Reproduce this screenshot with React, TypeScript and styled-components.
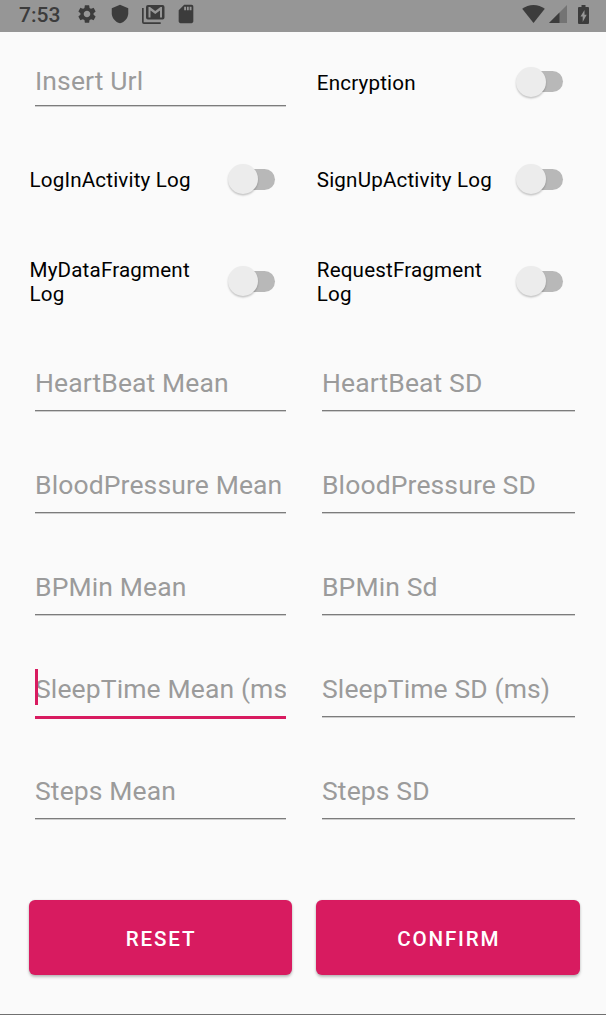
import React from 'react';
import styled, { createGlobalStyle } from 'styled-components';

const GlobalStyle = createGlobalStyle`
  * { box-sizing: border-box; }
  body { margin: 0; background: #fafafa; font-family: Roboto, "Liberation Sans", sans-serif; }
`;

const Screen = styled.div`
  display: flex;
  flex-direction: column;
  width: 606px;
  height: 1015px;
  overflow: hidden;
  background: #fafafa;
  border-bottom: 1px solid #707070;
`;

const StatusBar = styled.header`
  display: flex;
  align-items: center;
  justify-content: space-between;
  height: 32px;
  flex: none;
  padding: 0 17px 4px 19px;
  background: #969696;
  color: #3c3c3c;
`;

const StatusGroup = styled.div`
  display: flex;
  align-items: center;
`;

const Clock = styled.span`
  width: 57px;
  font-size: 21px;
  line-height: 26px;
  font-weight: 500;
  letter-spacing: 0;
  padding-top: 2px;
`;

const Icon = styled.svg<{ $gap?: number }>`
  display: block;
  flex: none;
  margin-right: ${(p) => p.$gap ?? 0}px;
  fill: currentColor;
`;

const Form = styled.main`
  display: grid;
  grid-template-columns: 263px 264px;
  grid-template-rows: 97px repeat(7, 102px) 1fr;
  column-gap: 24.3px;
  padding-left: 29px;
`;

const FieldCell = styled.div<{ $first?: boolean; $end?: boolean }>`
  padding: ${(p) => (p.$first ? 30 : 31)}px ${(p) => (p.$end ? 5.3 : 6)}px 0 ${(p) => (p.$end ? 5.7 : 6)}px;
`;

const FieldBox = styled.label<{ $focused?: boolean; $short?: boolean }>`
  display: flex;
  align-items: flex-start;
  position: relative;
  height: ${(p) => (p.$short ? 44 : p.$focused ? 49 : 47)}px;
  border-bottom: ${(p) => (p.$focused ? '3px solid #d81b60' : '1px solid #7c7c7c')};
  box-shadow: ${(p) => (p.$focused ? 'none' : '0 1px 0 rgba(0, 0, 0, 0.18)')};
`;

const Hint = styled.span`
  display: block;
  width: 100%;
  overflow: hidden;
  white-space: nowrap;
  color: #9b9b9b;
  font-size: 26.5px;
  line-height: 38px;
  letter-spacing: 0.12px;
`;

const Caret = styled.i`
  position: absolute;
  left: 0;
  top: -1px;
  width: 3px;
  height: 36px;
  background: #d81b60;
`;

const SwitchRow = styled.label<{ $first?: boolean }>`
  display: flex;
  align-items: center;
  justify-content: space-between;
  padding: ${(p) => (p.$first ? 4 : 0)}px 17px 0 0.5px;
`;

const SwitchText = styled.span<{ $first?: boolean }>`
  width: 185px;
  color: #000;
  font-size: 20.6px;
  line-height: 24.5px;
  letter-spacing: 0.17px;
  padding-top: ${(p) => (p.$first ? 2 : 0)}px;
`;

const Track = styled.span`
  display: flex;
  align-items: center;
  width: 40px;
  height: 21px;
  margin-bottom: 2px;
  border-radius: 11px;
  background: #b8b8b8;
`;

const Thumb = styled.span`
  flex: none;
  width: 30px;
  height: 30px;
  margin-left: -7px;
  border-radius: 50%;
  background: #ececec;
  box-shadow: 0 1.5px 2px rgba(0, 0, 0, 0.22);
`;

const ButtonCell = styled.div`
  padding-top: 57px;
`;

const ActionButton = styled.button`
  display: block;
  width: 100%;
  height: 75px;
  padding: 2px 0 0 1px;
  border: 0;
  border-radius: 6px;
  background: #d81b60;
  color: #fff;
  font: 500 20.6px/24px Roboto, "Liberation Sans", sans-serif;
  letter-spacing: 1.84px;
  box-shadow: 0 2px 3px rgba(0, 0, 0, 0.25), 0 0 2px rgba(0, 0, 0, 0.1);
`;

function Switch({ text, first }: { text: string; first?: boolean }) {
  return (
    <SwitchRow $first={first}>
      <SwitchText $first={first}>{text}</SwitchText>
      <Track>
        <Thumb />
      </Track>
    </SwitchRow>
  );
}

interface FieldProps {
  hint: string;
  first?: boolean;
  focused?: boolean;
  end?: boolean;
}

function Field({ hint, first, focused, end }: FieldProps) {
  return (
    <FieldCell $first={first} $end={end}>
      <FieldBox $short={first} $focused={focused}>
        {focused && <Caret />}
        <Hint>{hint}</Hint>
      </FieldBox>
    </FieldCell>
  );
}

const rows: [string, string][] = [
  ['HeartBeat Mean', 'HeartBeat SD'],
  ['BloodPressure Mean', 'BloodPressure SD'],
  ['BPMin Mean', 'BPMin Sd'],
  ['SleepTime Mean (ms', 'SleepTime SD (ms)'],
  ['Steps Mean', 'Steps SD'],
];

export default function App() {
  return (
    <Screen>
      <GlobalStyle />
      <StatusBar>
        <StatusGroup>
          <Clock>7:53</Clock>
          <Icon width="22" height="22" viewBox="0 0 24 24" $gap={11}>
            <path d="M19.14 12.94c.04-.3.06-.61.06-.94 0-.32-.02-.64-.07-.94l2.03-1.58a.49.49 0 0 0 .12-.61l-1.92-3.32a.488.488 0 0 0-.59-.22l-2.39.96c-.5-.38-1.03-.7-1.62-.94l-.36-2.54a.484.484 0 0 0-.48-.41h-3.84c-.24 0-.43.17-.47.41l-.36 2.54c-.59.24-1.13.57-1.62.94l-2.39-.96c-.22-.08-.47 0-.59.22L2.74 8.87c-.12.21-.08.47.12.61l2.03 1.58c-.05.3-.09.63-.09.94s.02.64.07.94l-2.03 1.58a.49.49 0 0 0-.12.61l1.92 3.32c.12.22.37.29.59.22l2.39-.96c.5.38 1.03.7 1.62.94l.36 2.54c.05.24.24.41.48.41h3.84c.24 0 .44-.17.47-.41l.36-2.54c.59-.24 1.13-.56 1.62-.94l2.39.96c.22.08.47 0 .59-.22l1.92-3.32c.12-.22.07-.47-.12-.61l-2.01-1.58zM12 15.6c-1.98 0-3.6-1.62-3.6-3.6s1.62-3.6 3.6-3.6 3.6 1.62 3.6 3.6-1.62 3.6-3.6 3.6z" />
          </Icon>
          <Icon width="22" height="20" viewBox="0 0 24 24" preserveAspectRatio="none" $gap={11}>
            <path d="M12 1 3 5v6c0 5.55 3.84 10.74 9 12 5.16-1.26 9-6.45 9-12V5l-9-4z" />
          </Icon>
          <Icon width="23" height="20" viewBox="0 0 23 20" $gap={10}>
            <path d="M0 4h1.700v14.300h17V20H2a2 2 0 0 1-2-2z" />
            <path
              fillRule="evenodd"
              d="M6 1h14.500a2 2 0 0 1 2 2v10.500a2 2 0 0 1-2 2H6a2 2 0 0 1-2-2V3a2 2 0 0 1 2-2zm.5 2v10.500h2V6.500l4.750 3.500L18 6.500v7h2V3h-1.500l-5.250 4L8 3z"
            />
          </Icon>
          <Icon width="22" height="22" viewBox="0 0 24 24">
            <path d="M18 2h-8L4.020 8 4 20c0 1.100.9 2 2 2h12c1.100 0 2-.9 2-2V4c0-1.100-.9-2-2-2zm-6 6h-2V4h2v4zm3 0h-2V4h2v4zm3 0h-2V4h2v4z" />
          </Icon>
        </StatusGroup>
        <StatusGroup>
          <Icon width="23" height="18" viewBox="0 0 23 18" $gap={4}>
            <path d="M11.500 18 .2 3.800C3.500 1.300 7.300 0 11.500 0s8 1.300 11.300 3.800z" />
          </Icon>
          <Icon width="18" height="18" viewBox="0 0 18 18" $gap={11}>
            <path d="M0 18 18 0v18z" opacity="0.38" />
            <path d="M0 18 10.500 7.500V18z" />
          </Icon>
          <Icon width="11" height="19" viewBox="0 0 11 19">
            <path
              fillRule="evenodd"
              d="M3.500 0h4v2H10a1 1 0 0 1 1 1v15a1 1 0 0 1-1 1H1a1 1 0 0 1-1-1V3a1 1 0 0 1 1-1h2.500zM6.500 5 2.500 11.500h2.200V17l4-7.200H6.500z"
            />
          </Icon>
        </StatusGroup>
      </StatusBar>
      <Form>
        <Field hint="Insert Url" first />
        <Switch text="Encryption" first />
        <Switch text="LogInActivity Log" />
        <Switch text="SignUpActivity Log" />
        <Switch text="MyDataFragment Log" />
        <Switch text="RequestFragment Log" />
        {rows.map(([mean, sd]) => (
          <React.Fragment key={mean}>
            <Field hint={mean} focused={mean.startsWith('SleepTime')} />
            <Field hint={sd} end />
          </React.Fragment>
        ))}
        <ButtonCell>
          <ActionButton>RESET</ActionButton>
        </ButtonCell>
        <ButtonCell>
          <ActionButton>CONFIRM</ActionButton>
        </ButtonCell>
      </Form>
    </Screen>
  );
}
